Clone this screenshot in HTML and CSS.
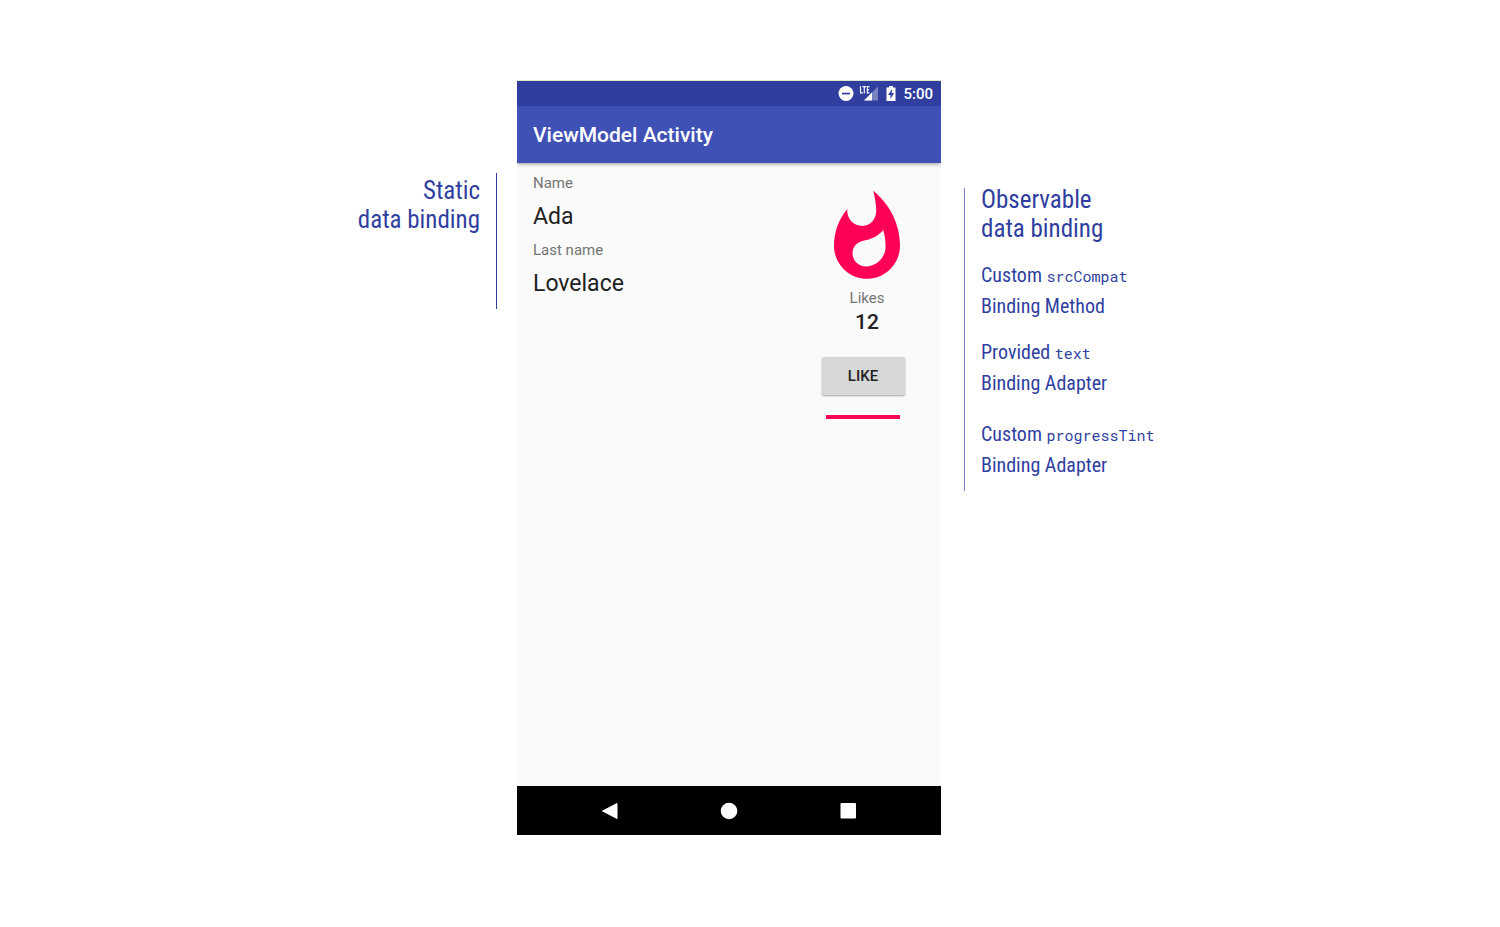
FILE: index.html
```html
<!DOCTYPE html>
<html lang="en">
<head>
<meta charset="utf-8">
<meta name="viewport" content="width=device-width, initial-scale=1">
<title>ViewModel Activity</title>
<link rel="stylesheet" href="styles.css">
</head>
<body>
<main class="diagram">
  <aside class="note note-static">
    <h2 class="note-title">Static<br>data binding</h2>
  </aside>

  <section class="phone">
    <div class="status-bar">
      <svg class="status-dnd" viewBox="0 0 16 16" aria-hidden="true"><circle cx="8" cy="7.500" r="7.500" fill="#fff"/><path d="M4 6.700h8v1.700H4z" fill="#303f9f"/></svg>
      <svg class="status-signal" viewBox="0 0 20 16" aria-hidden="true">
        <path d="M19 .5v14H5z" fill="#fff" opacity=".35"/><path d="M13 6.500v8H5z" fill="#fff"/>
        <path d="M1.500 0v6.900H3.900M3.500.6h3.600M5.300.6V7.500M10.400.6H8.300v6.300h2.100M8.300 3.700h1.900" fill="none" stroke="#fff" stroke-width="1.100"/>
      </svg>
      <svg class="status-battery" viewBox="0 0 10 16" aria-hidden="true"><path d="M3 0h4v1.500h2.500v13.500h-9V1.500H3z" fill="#fff"/><path d="M6 3L2 9h2.500V13L8 7H5.700z" fill="#303f9f"/></svg>
      <span>5:00</span>
    </div>
    <header class="app-bar"><h1 class="app-title">ViewModel Activity</h1></header>
    <div class="screen">
      <dl class="person">
        <dt>Name</dt><dd>Ada</dd>
        <dt>Last name</dt><dd>Lovelace</dd>
      </dl>
      <div class="likes">
        <svg class="flame" viewBox="0 0 24 24" aria-hidden="true"><path fill="#ff0057" d="M13.500.67s.74 2.650.74 4.800c0 2.060-1.350 3.730-3.410 3.730-2.070 0-3.630-1.670-3.630-3.730l.03-.36C5.210 7.510 4 10.620 4 14c0 4.420 3.580 8 8 8s8-3.580 8-8C20 8.610 17.410 3.800 13.500.67zM11.710 19c-1.780 0-3.220-1.400-3.220-3.140 0-1.620 1.050-2.760 2.810-3.120 1.770-.36 3.600-1.210 4.620-2.580.39 1.290.59 2.650.59 4.040 0 2.650-2.150 4.800-4.800 4.800z"/></svg>
        <span class="likes-label">Likes</span>
        <strong class="likes-count">12</strong>
        <div class="likes-action">
          <button class="like-button" type="button">LIKE</button>
          <div class="progress" role="progressbar" aria-label="Likes" aria-valuenow="100"></div>
        </div>
      </div>
    </div>
    <nav class="nav-bar">
      <button type="button" aria-label="Back"><svg viewBox="0 0 20 20"><path d="M17 2.500v15L2.500 10z" fill="#fff" stroke="#fff" stroke-linejoin="round"/></svg></button>
      <button type="button" aria-label="Home"><svg viewBox="0 0 20 20"><circle cx="10" cy="10" r="8.300" fill="#fff"/></svg></button>
      <button type="button" aria-label="Overview"><svg viewBox="0 0 20 20"><rect x="2.500" y="2" width="15.500" height="15.500" rx="1" fill="#fff"/></svg></button>
    </nav>
  </section>

  <aside class="note note-observable">
    <h2 class="note-title">Observable<br>data binding</h2>
    <p>Custom <code>srcCompat</code><br>Binding Method</p>
    <p>Provided <code>text</code><br>Binding Adapter</p>
    <p>Custom <code>progressTint</code><br>Binding Adapter</p>
  </aside>
</main>
</body>
</html>
```
FILE: styles.css
```css
* { box-sizing: border-box; }
body {
  margin: 0;
  background: #fff;
  font-family: Roboto, sans-serif;
}
h1, h2, p, dl, dd { margin: 0; }
svg { display: block; }

.diagram {
  display: grid;
  grid-template-columns: 1fr 424px 1fr;
  column-gap: 20px;
  align-items: start;
  padding: 80px 42px 80px 0;
}

/* Side notes */
.note {
  color: #303f9f;
  font-family: "Roboto Condensed", Roboto, sans-serif;
  font-size: 20px;
  line-height: 31px;
}
.note-title { font-size: 25px; line-height: 29px; font-weight: 400; }
.note-static {
  min-height: 136px;
  margin-top: 93px;
  padding: 3px 16px 0 0;
  border-right: 1px solid #303f9f;
  text-align: right;
}
.note-observable {
  display: flow-root;
  justify-self: start;
  min-height: 302px;
  margin: 108px 0 0 3px;
  padding: 0 0 10px 16px;
  border-left: 1px solid #7a84c4;
  white-space: nowrap;
}
.note-observable .note-title { margin-top: -3px; }
.note-observable p { margin-top: 15px; }
.note-observable .note-title + p { margin-top: 17px; }
.note-observable p:last-child { margin-top: 20px; }
.note code { font-family: "Roboto Mono", "DejaVu Sans Mono", monospace; font-size: 15px; line-height: 1; }

/* Phone */
.phone {
  display: flex;
  flex-direction: column;
  border-top: 1px solid #dde6cc;
  background: #fafafa;
}
.status-bar {
  display: flex;
  align-items: center;
  justify-content: flex-end;
  height: 25px;
  padding-right: 8px;
  background: #303f9f;
  color: #fff;
  font-size: 15px;
  font-weight: 500;
}
.status-dnd { width: 16px; height: 16px; margin-right: 5px; }
.status-signal { width: 20px; height: 16px; margin-right: 7px; }
.status-battery { width: 10px; height: 16px; margin-right: 7px; }
.app-bar {
  display: flex;
  align-items: center;
  height: 57px;
  padding: 0 16px;
  background: #3f51b5;
  box-shadow: 0 1px 4px rgba(0, 0, 0, .4);
  clip-path: inset(0 0 -6px 0);
  color: #fff;
}
.app-title { font-size: 21px; font-weight: 500; }
.screen {
  display: flex;
  justify-content: space-between;
  min-height: 623px;
  padding: 10px 24px 0 16px;
}
.person dt { color: #757575; font-size: 15px; line-height: 20px; }
.person dd { color: #212121; font-size: 23px; line-height: 28px; margin: 10px 0 9px; }
.likes {
  display: flex;
  flex-direction: column;
  align-items: center;
  width: 100px;
  padding-top: 15px;
}
.flame { width: 100px; height: 99px; }
.likes-label { margin-top: 1px; color: #757575; font-size: 15px; line-height: 20px; }
.likes-count { color: #212121; font-size: 21px; line-height: 28px; font-weight: 500; }
.likes-action {
  display: flex;
  flex-direction: column;
  align-items: center;
  gap: 20px;
  margin: 21px 8px 0 0;
}
.like-button {
  width: 83px;
  height: 38px;
  padding: 0;
  border: 0;
  border-radius: 2px;
  background: #d6d7d7;
  box-shadow: 0 1px 2px rgba(0, 0, 0, .35);
  color: #212121;
  font: 500 15px Roboto, sans-serif;
}
.progress { width: 74px; height: 4px; background: #ff0057; }
.nav-bar {
  display: flex;
  align-items: center;
  justify-content: center;
  gap: 99px;
  height: 49px;
  background: #000;
}
.nav-bar button { width: 20px; height: 20px; padding: 0; border: 0; background: none; }
```
